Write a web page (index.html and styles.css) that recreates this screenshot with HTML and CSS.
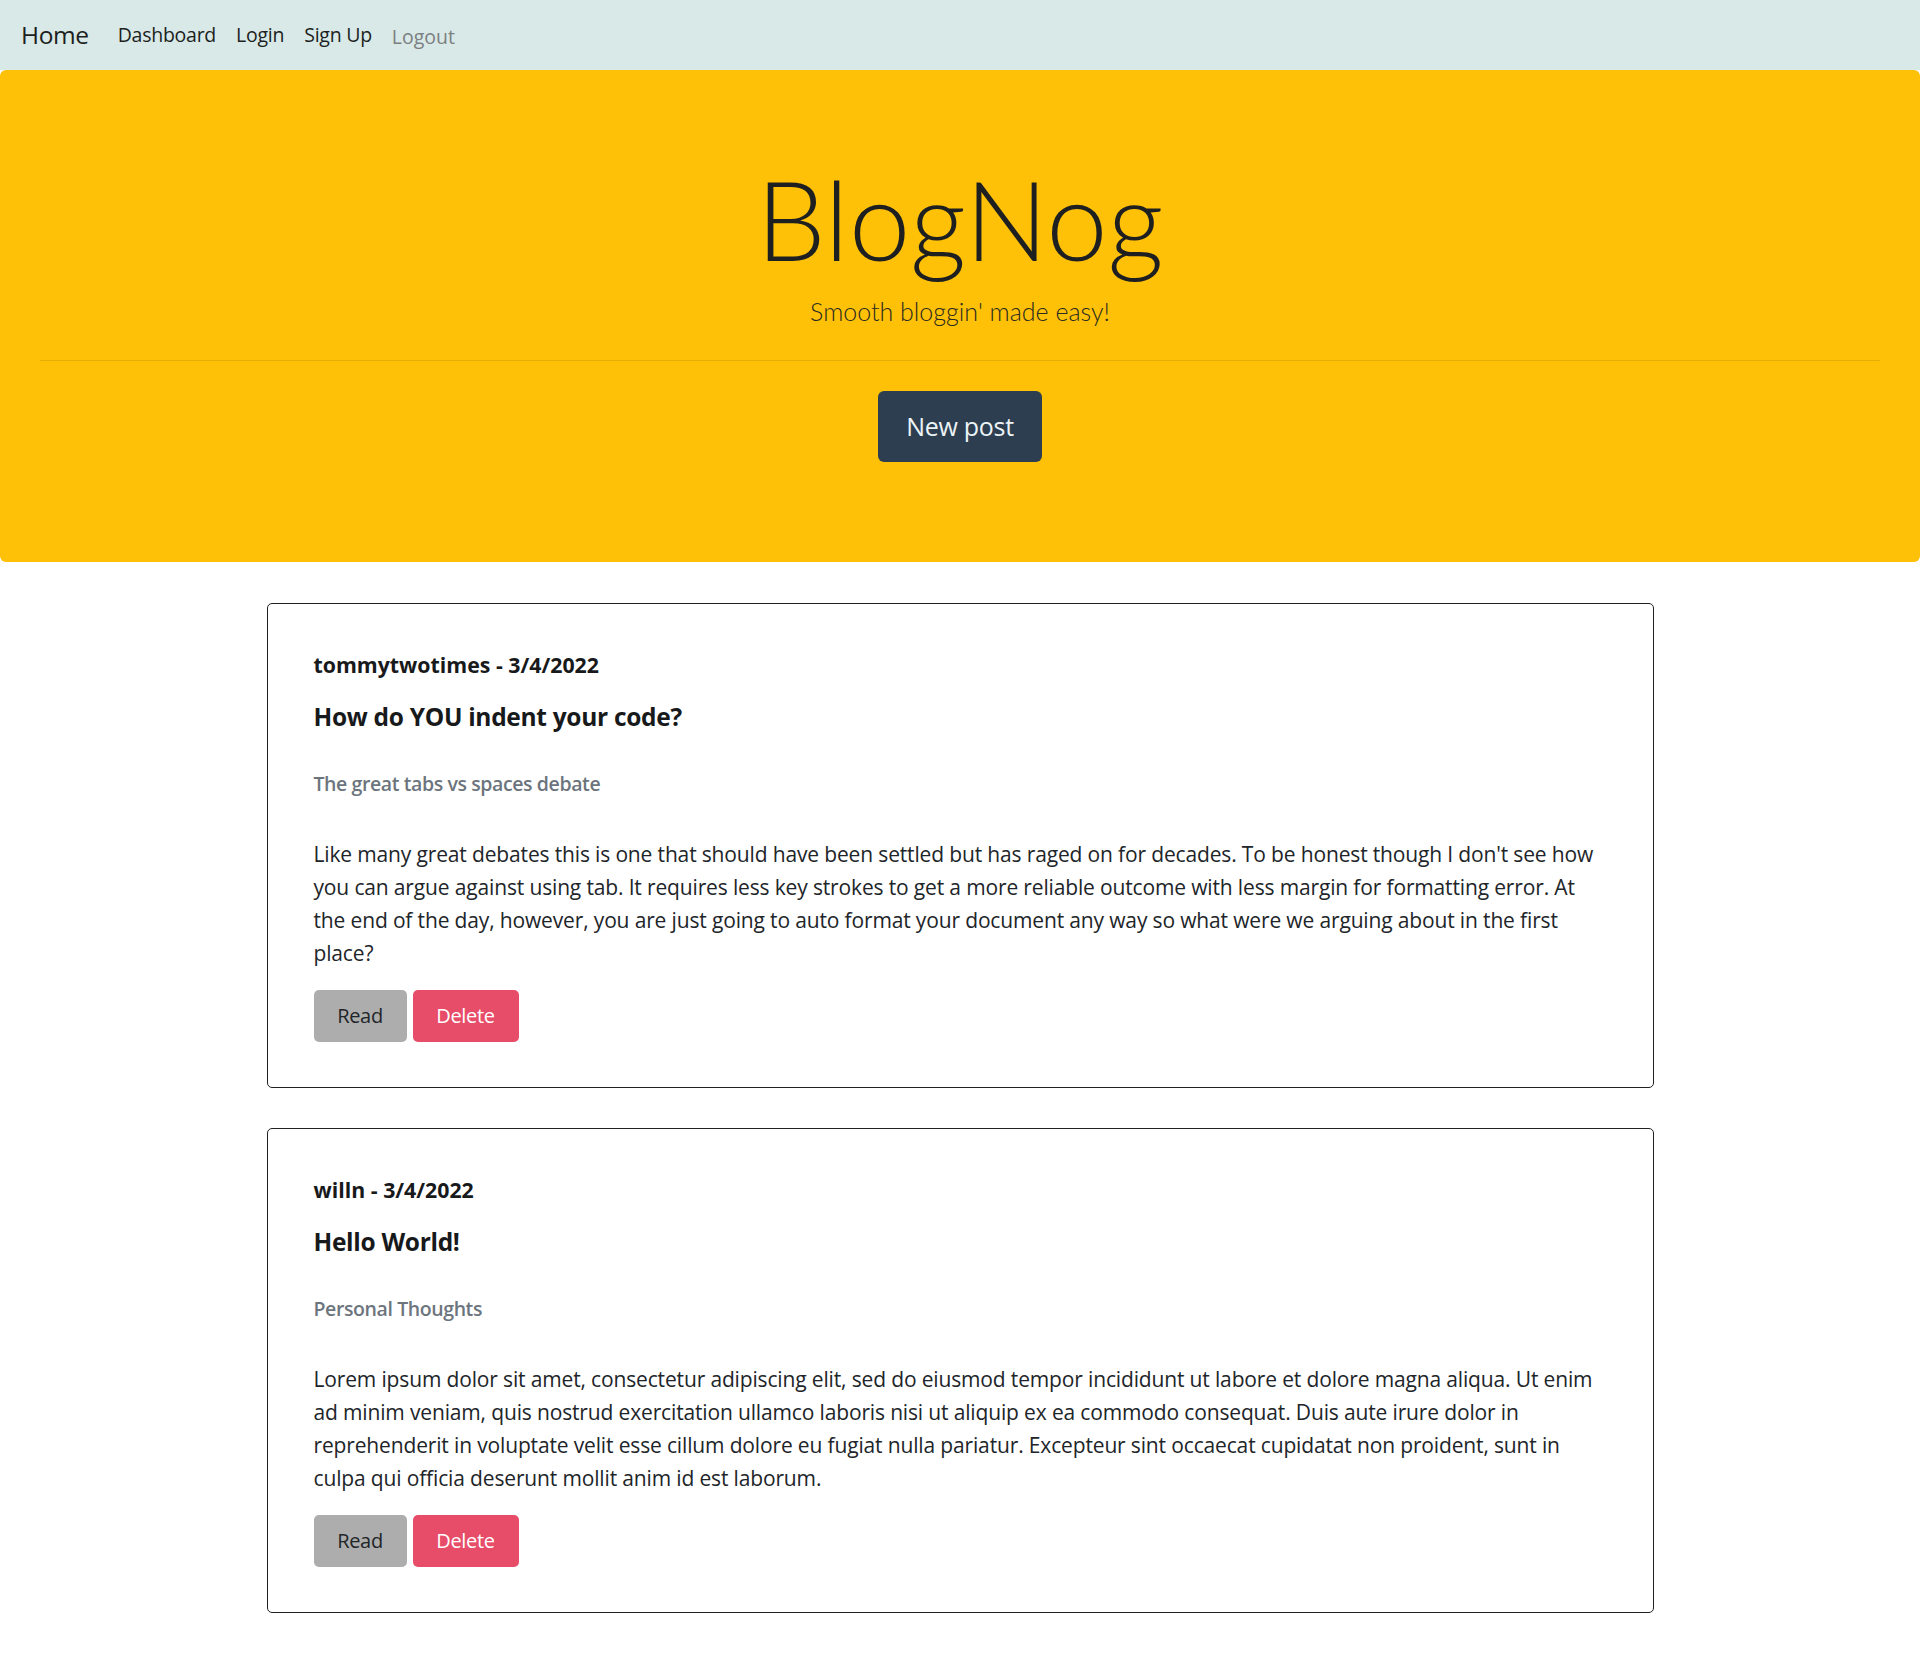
FILE: index.html
```html
<!DOCTYPE html>
<html lang="en">
<head>
<meta charset="utf-8">
<title>BlogNog</title>
<link rel="stylesheet" href="styles.css">
</head>
<body>
<nav class="navbar">
  <a class="brand" href="#">Home</a>
  <ul class="nav">
    <li><a class="nav-link" href="#">Dashboard</a></li>
    <li><a class="nav-link" href="#">Login</a></li>
    <li><a class="nav-link" href="#">Sign Up</a></li>
    <li><a class="nav-link nav-link-muted" href="#">Logout</a></li>
  </ul>
</nav>

<header class="hero">
  <h1 class="hero-title">BlogNog</h1>
  <p class="hero-lead">Smooth bloggin' made easy!</p>
  <hr class="hero-rule">
  <a class="btn-new" href="#">New post</a>
</header>

<main class="posts">
  <article class="card">
    <h6 class="card-author">tommytwotimes - 3/4/2022</h6>
    <h5 class="card-title">How do YOU indent your code?</h5>
    <h6 class="card-subtitle">The great tabs vs spaces debate</h6>
    <p class="card-text">Like many great debates this is one that should have been settled but has raged on for decades. To be honest though I don't see how you can argue against using tab. It requires less key strokes to get a more reliable outcome with less margin for formatting error. At the end of the day, however, you are just going to auto format your document any way so what were we arguing about in the first place?</p>
    <div class="card-actions">
      <button class="btn btn-read" type="button">Read</button>
      <button class="btn btn-delete" type="button">Delete</button>
    </div>
  </article>

  <article class="card">
    <h6 class="card-author">willn - 3/4/2022</h6>
    <h5 class="card-title">Hello World!</h5>
    <h6 class="card-subtitle">Personal Thoughts</h6>
    <p class="card-text">Lorem ipsum dolor sit amet, consectetur adipiscing elit, sed do eiusmod tempor incididunt ut labore et dolore magna aliqua. Ut enim ad minim veniam, quis nostrud exercitation ullamco laboris nisi ut aliquip ex ea commodo consequat. Duis aute irure dolor in reprehenderit in voluptate velit esse cillum dolore eu fugiat nulla pariatur. Excepteur sint occaecat cupidatat non proident, sunt in culpa qui officia deserunt mollit anim id est laborum.</p>
    <div class="card-actions">
      <button class="btn btn-read" type="button">Read</button>
      <button class="btn btn-delete" type="button">Delete</button>
    </div>
  </article>
</main>
</body>
</html>
```

FILE: styles.css
```css
* {
  box-sizing: border-box;
}

html, body {
  margin: 0;
  padding: 0;
  background: #ffffff;
}

body {
  font-family: "Open Sans", "Noto Sans", "Liberation Sans", sans-serif;
  color: #212529;
  padding-bottom: 63px;
}

a {
  text-decoration: none;
}

/* ---------- Navbar ---------- */
.navbar {
  display: flex;
  align-items: center;
  height: 70px;
  padding: 0 21px;
  background: #d8e9e8;
}

.brand {
  font-size: 24.5px;
  line-height: 37.5px;
  color: #1d1f21;
  margin-right: 19px;
  letter-spacing: -0.4px;
}

.nav {
  display: flex;
  align-items: center;
  list-style: none;
  margin: 0;
  padding: 0;
}

.nav-link {
  display: block;
  padding: 0 10px;
  font-size: 19.5px;
  line-height: 30px;
  color: #1d1f21;
  letter-spacing: -0.25px;
}

.nav-link-muted {
  color: #7d7f80;
  margin-top: 4px;
  letter-spacing: 0;
}

/* ---------- Hero ---------- */
.hero {
  display: flex;
  flex-direction: column;
  align-items: center;
  background: #ffc107;
  border-radius: 6px;
  padding: 82px 40px 100px;
}

.hero-title {
  margin: 0;
  font-family: "Lato", "Open Sans", sans-serif;
  font-weight: 300;
  font-size: 110px;
  line-height: 133px;
  color: #1e1f20;
}

.hero-lead {
  margin: 8px 0 0;
  font-family: "Lato", "Open Sans", sans-serif;
  font-weight: 300;
  font-size: 25px;
  line-height: 37.5px;
  color: #2a2a22;
}

.hero-rule {
  align-self: stretch;
  margin: 29px 0 0;
  height: 0;
  border: 0;
  border-top: 1px solid rgba(0, 0, 0, 0.1);
}

.btn-new {
  display: flex;
  align-items: center;
  justify-content: center;
  margin-top: 30px;
  width: 164px;
  height: 71px;
  border-radius: 6px;
  background: #2c3e50;
  color: #ecf4f7;
  font-size: 25px;
  letter-spacing: -0.3px;
}

/* ---------- Posts ---------- */
.posts {
  display: flex;
  flex-direction: column;
  align-items: center;
  gap: 40px;
  padding-top: 41px;
}

.card {
  width: 1387px;
  border: 1px solid #1f2122;
  border-radius: 5px;
  padding: 49px 46px 45px;
}

.card-author {
  margin: 0 0 25px;
  font-size: 21.3px;
  line-height: 24px;
  font-weight: 700;
  color: #17191b;
}

.card-title {
  margin: 0 0 40px;
  font-size: 24.5px;
  line-height: 30px;
  font-weight: 700;
  color: #17191b;
  letter-spacing: -0.3px;
}

.card-subtitle {
  margin: 0 0 42px;
  font-size: 19.5px;
  line-height: 24px;
  font-weight: 600;
  color: #6c757d;
  letter-spacing: -0.4px;
}

.card-text {
  margin: 0 0 20px;
  font-size: 21px;
  line-height: 33px;
  color: #212529;
  letter-spacing: -0.15px;
}

.card-actions {
  display: flex;
  gap: 6px;
}

.btn {
  display: flex;
  align-items: center;
  justify-content: center;
  height: 52px;
  padding: 0;
  border: 0;
  border-radius: 5px;
  font-family: "Open Sans", "Noto Sans", "Liberation Sans", sans-serif;
  font-size: 20px;
  letter-spacing: -0.3px;
  cursor: pointer;
}

.btn-read {
  width: 93px;
  background: #adadad;
  color: #212529;
}

.btn-delete {
  width: 106px;
  background: #e74c69;
  color: #ffffff;
}
```
